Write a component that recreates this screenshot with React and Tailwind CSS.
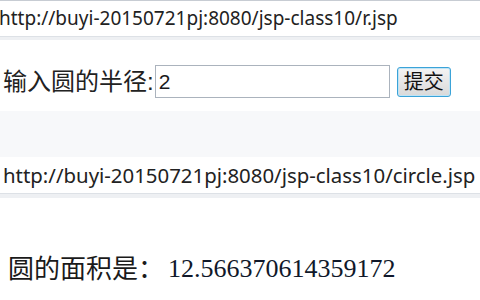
export default function App() {
  const ui = { fontFamily: '"Noto Sans", "Noto Sans CJK SC", sans-serif' };
  const cjk = { fontFamily: '"Liberation Sans", "Noto Sans CJK SC", sans-serif' };
  return (
    <div className="w-[480px] h-[300px] bg-white overflow-hidden flex flex-col text-[#1b1b1b]">
      {/* first address bar */}
      <div className="h-[36px] shrink-0 border-t border-[#c7ccd3] bg-white flex items-center whitespace-nowrap" style={ui}>
        <span className="text-[19px] leading-none -ml-[1px] text-[#222]">http://buyi-20150721pj:8080/jsp-class10/r.jsp</span>
      </div>
      <div className="h-[4px] shrink-0 border-t border-[#dde1e6] bg-[#eef0f3]" />

      {/* form */}
      <div className="mt-[25px] h-[33px] shrink-0 flex items-center pl-[3px]" style={cjk}>
        <span className="text-[24px] leading-none text-[#222]">输入圆的半径:</span>
        <div className="ml-[1px] w-[235px] h-[33px] border border-[#abb3bd] bg-white flex items-center pl-[3px]">
          <span className="text-[21px] leading-none text-[#1a1a1a]" style={{ fontFamily: '"Liberation Sans", sans-serif' }}>2</span>
        </div>
        <div className="ml-[7px] w-[54px] h-[30px] rounded-[3px] border border-[#3ba3d8] bg-gradient-to-b from-[#f4f4f4] to-[#d9d9d9] flex items-center justify-center shadow-[inset_0_0_0_1px_#bfe4f6]">
          <span className="text-[20px] leading-none text-[#111]">提交</span>
        </div>
      </div>

      {/* gap band */}
      <div className="mt-[13px] h-[46px] shrink-0 bg-[#f7f8fa]" />

      {/* second address bar */}
      <div className="h-[36px] shrink-0 bg-white flex items-center whitespace-nowrap pl-[3px]" style={ui}>
        <span className="text-[20.4px] leading-none text-[#222]">http://buyi-20150721pj:8080/jsp-class10/circle.jsp</span>
      </div>
      <div className="h-[5px] shrink-0 border-t border-[#dde1e6] bg-[#eef0f3]" />

      {/* result */}
      <div className="mt-[58px] flex items-center pl-[8px] whitespace-nowrap">
        <span className="text-[26px] leading-none text-[#1a1a1a]" style={cjk}>圆的面积是：</span>
        <span className="ml-[4px] text-[26px] leading-none text-[#10182a]" style={{ fontFamily: '"Liberation Serif", serif' }}>12.566370614359172</span>
      </div>
    </div>
  );
}
